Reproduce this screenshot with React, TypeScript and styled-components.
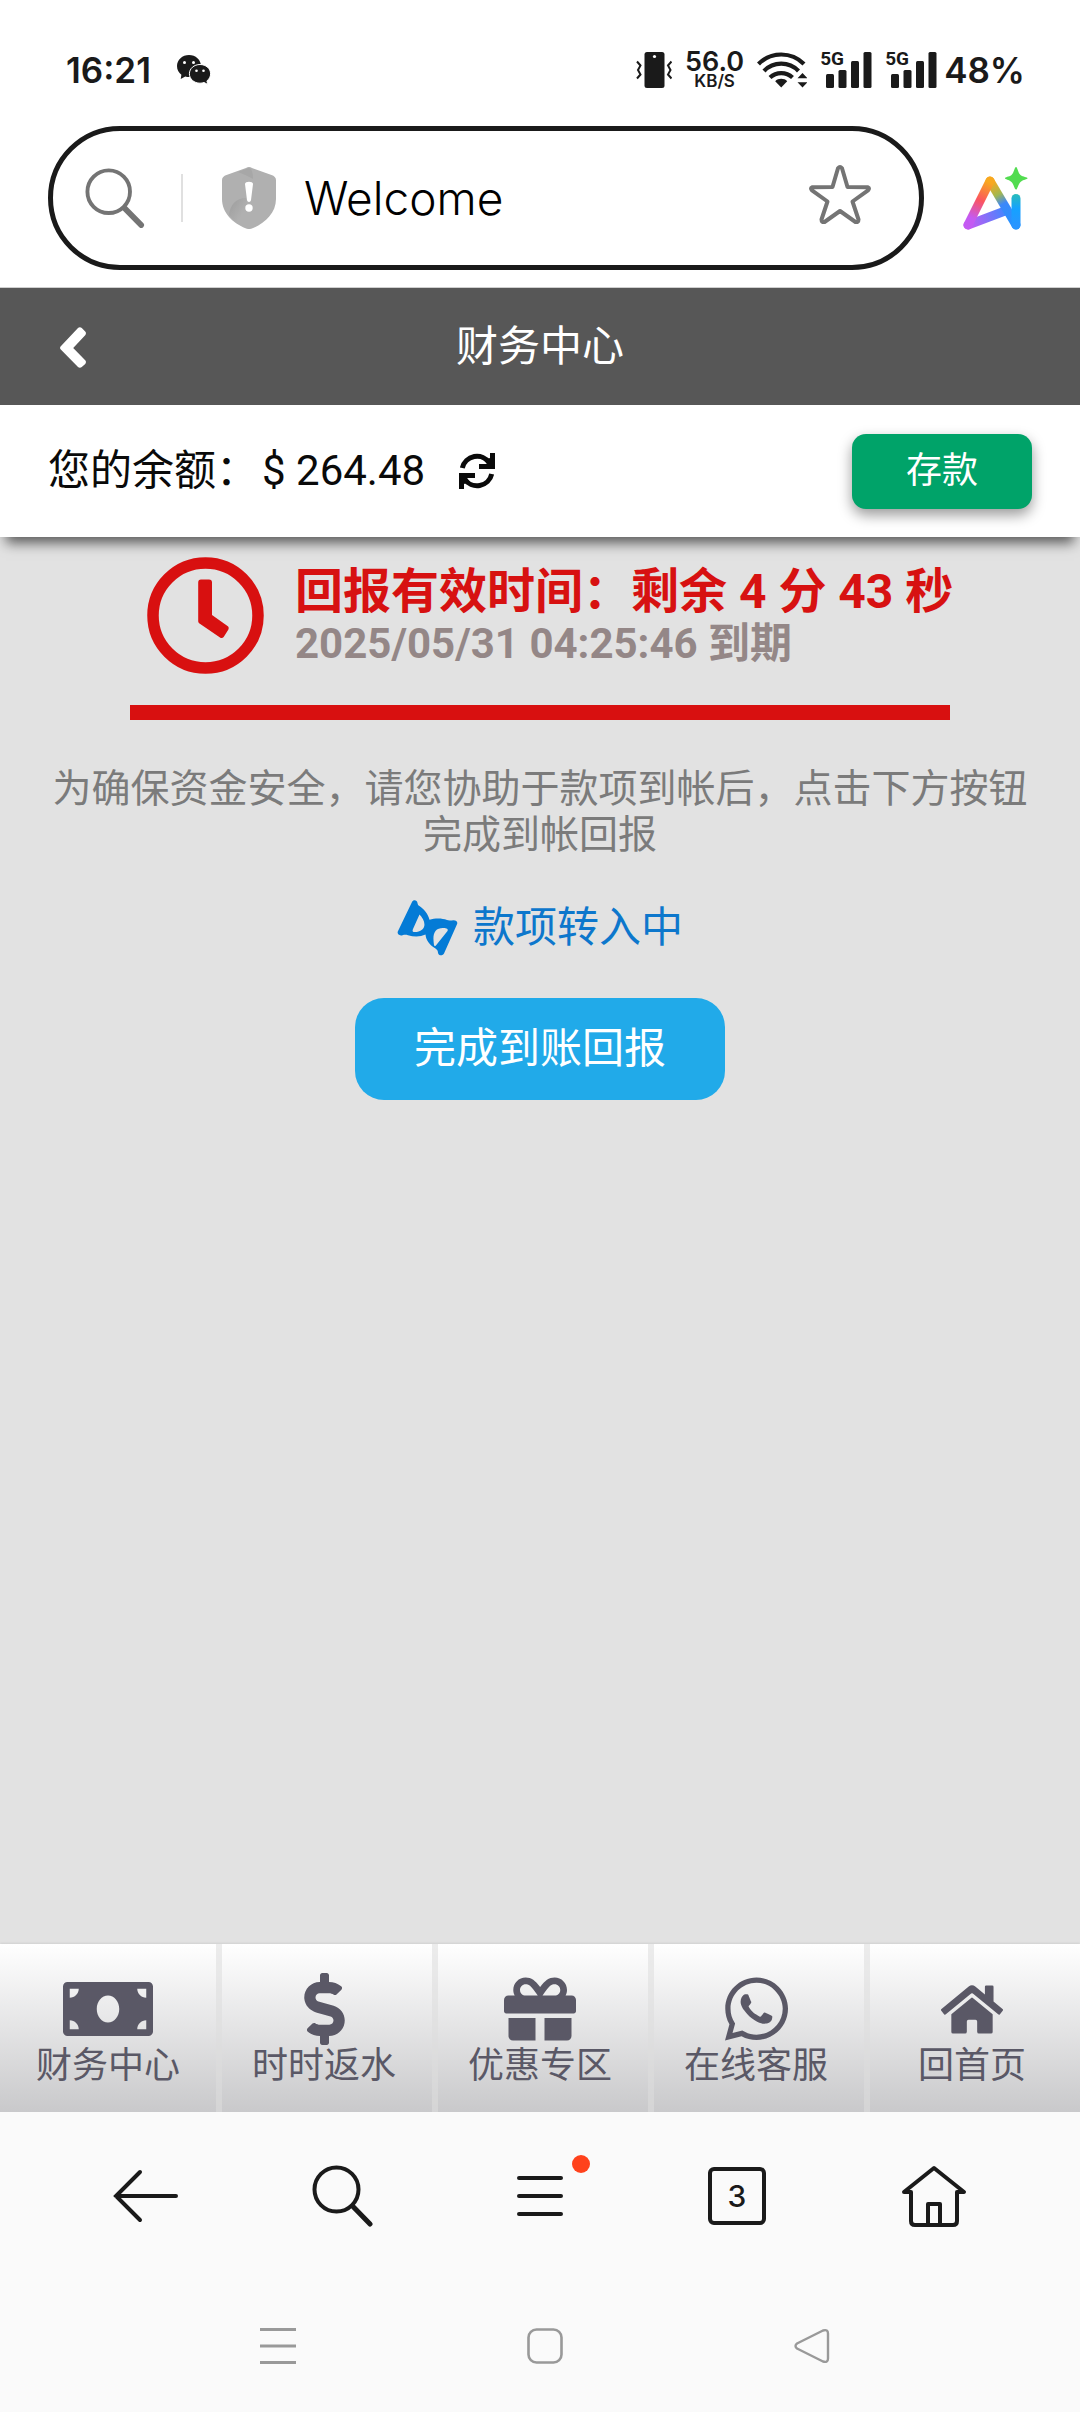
import React from "react";
import styled, { createGlobalStyle } from "styled-components";
import {
  FaDollarSign,
  FaGift,
  FaHome,
  FaMoneyBill,
  FaWhatsapp,
} from "react-icons/fa";

const uiFont = `Roboto, "Noto Sans CJK SC", sans-serif`;
const systemFont = `Inter, "Noto Sans CJK SC", sans-serif`;

const GlobalStyle = createGlobalStyle`
  *, *::before, *::after { box-sizing: border-box; }
  body { margin: 0; background: #fafafa; font-family: ${uiFont}; }
  button, input { font: inherit; color: inherit; margin: 0; padding: 0; border: 0; background: none; }
  button { cursor: pointer; }
  a { color: inherit; text-decoration: none; }
  h1, h2, p { margin: 0; font-weight: inherit; font-size: inherit; }
  svg { display: block; flex: none; }
`;

const Screen = styled.div`
  min-height: 100vh;
  display: flex;
  flex-direction: column;
`;

/* ---------- phone status bar ---------- */

const StatusBar = styled.div`
  display: flex;
  align-items: center;
  justify-content: space-between;
  height: 126px;
  padding: 14px 55px 0 66px;
  background: #fff;
  color: #1a1a1a;
  font-family: ${systemFont};
`;

const StatusGroup = styled.div<{ $gap: number }>`
  display: flex;
  align-items: center;
  gap: ${(p) => p.$gap}px;
`;

const StatusText = styled.span`
  font-size: 35px;
  line-height: 40px;
  font-weight: 600;
`;

const NetSpeed = styled.div`
  display: flex;
  flex-direction: column;
  align-items: center;
  font-weight: 600;
`;

const SpeedValue = styled.span`
  font-size: 27px;
  line-height: 23px;
`;

const SpeedUnit = styled.span`
  font-size: 17px;
  line-height: 17px;
`;

const SignalBox = styled.div`
  position: relative;
  width: 52px;
  height: 36px;
`;

const SignalLabel = styled.span`
  position: absolute;
  top: 0;
  left: 0;
  font-family: Roboto, sans-serif;
  font-size: 19px;
  line-height: 14px;
  font-weight: 700;
`;

/* ---------- browser address bar ---------- */

const AddressRow = styled.div`
  display: flex;
  align-items: center;
  gap: 39px;
  padding: 0 52px 17px 48px;
  background: #fff;
  border-bottom: 1px solid #cfcfcf;
`;

const AddressPill = styled.div`
  flex: 1;
  min-width: 0;
  display: flex;
  align-items: center;
  height: 144px;
  padding: 0 48px 0 32px;
  border: 5px solid #1a1a1a;
  border-radius: 72px;
`;

const Divider = styled.span`
  width: 2px;
  height: 48px;
  margin: 0 39px 0 36px;
  background: #e0e0e0;
`;

const AddressInput = styled.input`
  flex: 1;
  min-width: 0;
  margin-left: 28px;
  font-family: ${systemFont};
  font-size: 46px;
  line-height: 56px;
  font-weight: 300;
  color: #000;
  outline: none;
`;

/* ---------- page header and balance ---------- */

const PageHeader = styled.header`
  display: grid;
  grid-template-columns: 86px 1fr 86px;
  align-items: center;
  height: 117px;
  background: #575757;
  color: #fff;
`;

const BackButton = styled.button`
  display: flex;
  justify-content: flex-end;
`;

const PageTitle = styled.h1`
  text-align: center;
  font-size: 42px;
  line-height: 60px;
`;

const BalanceBar = styled.section`
  position: relative;
  display: flex;
  align-items: center;
  height: 132px;
  padding: 0 48px;
  background: #fff;
  color: #0a0a0a;
  box-shadow: 0 12px 12px -6px rgba(0, 0, 0, 0.6);
`;

const BalanceText = styled.span`
  font-size: 42px;
  line-height: 60px;
`;

const Amount = styled.span`
  margin-left: 4px;
`;

const RefreshButton = styled.button`
  margin-left: 34px;
`;

const DepositButton = styled.button`
  width: 180px;
  height: 75px;
  margin-left: auto;
  border-radius: 14px;
  background: #00a369;
  color: #fff;
  font-size: 36px;
  line-height: 48px;
  box-shadow: 0 6px 14px rgba(0, 0, 0, 0.4);
`;

/* ---------- report panel ---------- */

const Report = styled.main`
  flex: 1;
  display: flex;
  flex-direction: column;
  align-items: center;
  gap: 42px;
  padding: 20px 48px 40px;
  background: #e2e2e2;
`;

const Timer = styled.section`
  width: 820px;
  max-width: 100%;
  display: flex;
  align-items: center;
  gap: 31px;
  padding: 0 0 31px 17px;
  border-bottom: 15px solid #d81010;
  white-space: nowrap;
  font-weight: 700;
`;

const TimerTitle = styled.h2`
  font-size: 48px;
  line-height: 56px;
  color: #d71111;
`;

const TimerExpiry = styled.p`
  font-size: 42px;
  line-height: 48px;
  color: #948787;
`;

const Notice = styled.p`
  padding-top: 4px;
  font-size: 39px;
  line-height: 46px;
  text-align: center;
  color: #7b7b7b;
`;

const Progress = styled.div`
  display: flex;
  align-items: center;
  gap: 14px;
  font-size: 42px;
  line-height: 56px;
  color: #0d77cc;
`;

const SubmitButton = styled.button`
  width: 370px;
  height: 102px;
  border-radius: 29px;
  background: #21aae9;
  color: #fff;
  font-size: 42px;
  line-height: 60px;
`;

/* ---------- site tab bar ---------- */

const SiteNav = styled.nav`
  display: grid;
  grid-template-columns: repeat(5, 1fr);
  background: linear-gradient(#fff, #c9c9cb);
  box-shadow: 0 -1px 2px rgba(0, 0, 0, 0.08);
`;

const SiteNavLink = styled.a`
  display: flex;
  flex-direction: column;
  align-items: center;
  padding: 29px 0 25px;
  color: #5a5866;
  font-size: 36px;
  line-height: 42px;

  & + & { box-shadow: inset 6px 0 0 rgba(221, 221, 221, 0.56); }
`;

const SiteNavIcon = styled.span<{ $width: number; $height: number }>`
  display: flex;
  align-items: center;
  height: 72px;
  svg {
    width: ${(p) => p.$width}px;
    height: ${(p) => p.$height}px;
  }
`;

/* ---------- browser and system navigation ---------- */

const BrowserBar = styled.nav`
  display: grid;
  grid-template-columns: repeat(5, 1fr);
  height: 168px;
  padding: 0 48px;
  background: #fafafa;
  color: #1a1a1a;
`;

const BarButton = styled.button`
  display: flex;
  align-items: center;
  justify-content: center;
`;

const MenuIconBox = styled.span`
  position: relative;
`;

const Dot = styled.span`
  position: absolute;
  top: -21px;
  right: -27px;
  width: 18px;
  height: 18px;
  border-radius: 50%;
  background: #ff421c;
`;

const TabCount = styled.span`
  display: flex;
  align-items: center;
  justify-content: center;
  width: 58px;
  height: 58px;
  border: 4px solid #1a1a1a;
  border-radius: 6px;
  font-family: ${systemFont};
  font-size: 30px;
  line-height: 36px;
  font-weight: 500;
`;

const SystemBar = styled.nav`
  display: grid;
  grid-template-columns: repeat(3, 1fr);
  height: 132px;
  padding: 0 134px 0 144px;
  background: #fafafa;
  color: #999;
`;

/* ---------- drawings ---------- */

const WeChatIcon = () => (
  <svg width="34" height="30" viewBox="0 0 34 30" aria-hidden="true">
    <path
      fill="#1a1a1a"
      d="M12 0C5.400 0 0 4.800 0 11c0 3.700 1.700 6.700 4.400 8.700L3.700 24l4.600-2.600c1.200.4 2.400.6 3.700.6 6.600 0 12-4.800 12-11S18.600 0 12 0z"
    />
    <path
      fill="#1a1a1a"
      stroke="#fff"
      strokeWidth="1"
      d="M23 9.500c-5.900 0-10.600 4-10.600 9.300 0 5.200 4.700 9.400 10.600 9.400 1.500 0 2.800-.3 4-.7l3.900 2-1-3.600c2.300-1.700 3.700-4.200 3.700-7.100 0-5.300-4.700-9.300-10.600-9.300z"
    />
    <g fill="#fff">
      <circle cx="7.500" cy="7.500" r="1.500" />
      <circle cx="16.500" cy="7.500" r="1.500" />
      <circle cx="19.500" cy="15.800" r="1.300" />
      <circle cx="26.500" cy="15.800" r="1.300" />
    </g>
  </svg>
);

const VibrateIcon = () => (
  <svg width="36" height="36" viewBox="0 0 36 36" aria-hidden="true">
    <rect x="8.500" y="0" width="20" height="36" rx="2.500" fill="#1a1a1a" />
    <circle cx="18.500" cy="4.500" r="1.600" fill="#fff" />
    <g fill="none" stroke="#1a1a1a" strokeWidth="2">
      <path d="M1 9.500l3.500 4-2.500 4.500 2.500 4.500L1 26.500" />
      <path d="M35.500 9.500l-3.500 4 2.500 4.500-2.500 4.500 3.500 4" />
    </g>
  </svg>
);

const WifiIcon = () => (
  <svg width="50" height="36" viewBox="0 0 50 36" aria-hidden="true">
    <g fill="none" stroke="#1a1a1a" strokeWidth="4.200">
      <path d="M1.500 12a32 32 0 0 1 45.500 0" />
      <path d="M7 19a24 24 0 0 1 34.500 0" />
      <path d="M13 25.500a16.500 16.500 0 0 1 22.500 0" />
    </g>
    <path fill="#1a1a1a" d="M24.200 35.500l-6-6.300c3-3.200 9-3.200 12 0z" />
    <path fill="#1a1a1a" d="M45.500 21l5 5.200H40.500zM45.500 35.500l5-5.200H40.500z" />
  </svg>
);

const Signal = () => (
  <SignalBox>
    <svg width="52" height="36" viewBox="0 0 52 36" aria-hidden="true">
      <g fill="#1a1a1a">
        <rect x="6" y="22" width="8" height="14" rx="1.500" />
        <rect x="18.500" y="18" width="8" height="18" rx="1.500" />
        <rect x="31" y="9" width="8" height="27" rx="1.500" />
        <rect x="43.500" y="0" width="8" height="36" rx="1.500" />
      </g>
    </svg>
    <SignalLabel>5G</SignalLabel>
  </SignalBox>
);

const SearchIcon = ({ color, handle, size }: { color: string; handle: number; size: number }) => (
  <svg width={size} height={size} viewBox="0 0 62 62" fill="none" stroke={color} aria-hidden="true">
    <circle cx="24.500" cy="24.500" r="22" strokeWidth="4" />
    <path d="M41 41.500l17 17.500" strokeWidth={handle} strokeLinecap="round" />
  </svg>
);

const ShieldIcon = () => (
  <svg width="54" height="62" viewBox="0 0 54 62" aria-hidden="true">
    <defs>
      <linearGradient id="shieldShade" x1="0" y1="0" x2="1" y2="1">
        <stop offset="0" stopColor="#9c9c9c" />
        <stop offset="0.600" stopColor="#b0b0b0" />
      </linearGradient>
    </defs>
    <path
      fill="#b0b0b0"
      d="M27 0c1 0 2 .4 3 1l19.500 7c2.700 1 4.500 2.500 4.500 5v19c0 14-11 24-23.500 29.300-2.500 1-4.500 1-7 0C11 56 0 46 0 32V13c0-2.500 1.800-4 4.500-5L24 1c1-.6 2-1 3-1z"
    />
    <path fill="url(#shieldShade)" d="M24 31C14 31 8 38 7 48c5 6 11 10 18 13 4-6 2-14-1-20 1-3 1-6 0-10z" />
    <path fill="#a7a7a7" d="M16 5L27 1c3 1 4 5 4 11-4-2-9-5-15-7z" />
    <path fill="#fff" d="M23 17c0-3 8-3 8 0l-2 16c-.4 2.500-3.600 2.500-4 0z" />
    <circle cx="27" cy="41" r="3.700" fill="#fff" />
  </svg>
);

const StarIcon = () => (
  <svg
    width="62"
    height="66"
    viewBox="0 0 62 66"
    fill="none"
    stroke="#747474"
    strokeWidth="4"
    strokeLinejoin="round"
    aria-hidden="true"
  >
    <path d="M29 3.200q2-2.400 4 0l5.500 18.800 20.500.3q2 .8 0 3L43.500 36.500l6 18q0 3-3 2.500L31 46 15.500 57q-3 .5-3-2.500l6-18L3 25.300q-2-2.200 0-3L23.500 22z" />
  </svg>
);

const AiLogo = () => (
  <svg width="65" height="63" viewBox="0 0 65 63" fill="none" aria-hidden="true">
    <defs>
      <linearGradient id="aiLeft" gradientUnits="userSpaceOnUse" x1="27" y1="10" x2="5" y2="58">
        <stop offset="0.100" stopColor="#f8a81f" />
        <stop offset="0.480" stopColor="#fb5560" />
        <stop offset="0.850" stopColor="#c45af2" />
      </linearGradient>
      <linearGradient id="aiCross" gradientUnits="userSpaceOnUse" x1="6" y1="57" x2="42" y2="43">
        <stop offset="0" stopColor="#c45af2" />
        <stop offset="1" stopColor="#4286ff" />
      </linearGradient>
      <linearGradient id="aiRight" gradientUnits="userSpaceOnUse" x1="27" y1="10" x2="53" y2="58">
        <stop offset="0.100" stopColor="#f8a81f" />
        <stop offset="0.350" stopColor="#a4b84d" />
        <stop offset="0.550" stopColor="#3d88fa" />
        <stop offset="1" stopColor="#2393ff" />
      </linearGradient>
      <linearGradient id="aiStem" gradientUnits="userSpaceOnUse" x1="53" y1="25" x2="53" y2="58">
        <stop offset="0" stopColor="#2cc0b0" />
        <stop offset="0.500" stopColor="#14a2ff" />
        <stop offset="1" stopColor="#2996ff" />
      </linearGradient>
    </defs>
    <g strokeWidth="9" strokeLinecap="round" strokeLinejoin="round">
      <path stroke="url(#aiCross)" d="M5 58l37-14" />
      <path stroke="url(#aiRight)" d="M27 14l26 44" />
      <path stroke="url(#aiLeft)" d="M27 14L5 58" />
      <path stroke="url(#aiStem)" d="M53 58V31.500" />
    </g>
    <path fill="#52dc50" d="M53 0c1.500 0 2 6 4.500 8.000S64.500 10 64.500 11.200s-4.500 1.300-7 3.800-3 7.500-4.500 7.500-2-5-4.500-7.500-6.500-2.500-6.500-3.800 4-1.200 6.500-3.200S51.500 0 53 0z" />
  </svg>
);

const ChevronIcon = () => (
  <svg width="26" height="42" viewBox="0 0 26 42" aria-hidden="true">
    <path
      fill="#fff"
      d="M18 2c1-1 2.800-1 3.800 0l3.400 3.400c1 1 1 2.800 0 3.800L13.200 22l12 12.200c1 1 1 2.800 0 3.800l-3.400 3c-1 1-2.800 1-3.800 0L.8 23.500c-1-1-1-2.200 0-3.200z"
    />
  </svg>
);

const RefreshIcon = () => (
  <svg width="36" height="38" viewBox="0 0 36 38" aria-hidden="true">
    <g fill="none" stroke="#0a0a0a" strokeWidth="5">
      <path d="M3.300 16A15 15 0 0 1 30.500 11" />
      <path d="M32.700 22A15 15 0 0 1 5.500 27" />
    </g>
    <path fill="#0a0a0a" d="M31 1h5v16H20v-5h8l-3-4 6-2z" />
    <path fill="#0a0a0a" d="M5 37H0V21h16v5H8l3 4-6 2z" />
  </svg>
);

const ClockIcon = () => (
  <svg width="117" height="117" viewBox="0 0 117 117" fill="none" aria-hidden="true">
    <circle cx="58.500" cy="58.500" r="52.500" stroke="#d81010" strokeWidth="11.500" />
    <path
      fill="#d81010"
      d="M54 22.500h8c2 0 3 1 3 3V58l15.500 11c1.500 1 1.500 2.500.6 4L77 79.500c-1 1.500-2.500 2-4 1L52.500 66.500c-1-.7-1.300-1.500-1.300-2.500V25.500c0-2 1-3 2.800-3z"
    />
  </svg>
);

const HourglassIcon = () => (
  <svg width="62" height="56" viewBox="0 0 62 56" aria-hidden="true">
    <path
      fill="#047bd6"
      fillRule="evenodd"
      d="M15 2c1-2.500 5-2.500 5.500 1 .2 1 .4 2 1.500 2.800 5 3.400 9 8 10.500 14C38 18 45 18 50 20c2 .8 4 .3 6.500.2 3 0 4.500 2 3.500 4L47 53.500c-1.200 2.600-5.500 2.500-6-.8-.2-2-.8-3-2.500-4.200C32 44.500 29 40 28.500 34.500 23 37 17 36.800 11 35.200c-2-.5-3.500-.5-5.500 0C2 36 0 34 .8 31.500zM22.500 14.500L16 29c-.8 2-.5 3 1.500 3 4 .2 8-1.600 9.500-5 1.500-4-1-9-4.500-12.500zM49.500 28.500c-4-1-8.500-.5-11 2.500-3 4-2 10-1.500 14 .3 1.500 1.500 1.500 2.300 0L50.500 31c.5-1.200.2-2.200-1-2.500z"
    />
  </svg>
);

const ArrowLeftIcon = () => (
  <svg width="66" height="54" viewBox="0 0 66 54" fill="none" stroke="#1a1a1a" strokeWidth="4" strokeLinecap="round" aria-hidden="true">
    <path d="M27 3L3 27l24 24M3 27h60" />
  </svg>
);

const MenuIcon = () => (
  <svg width="46" height="40" viewBox="0 0 46 40" stroke="#1a1a1a" strokeWidth="4" strokeLinecap="round" aria-hidden="true">
    <path d="M2 2h42M2 20h42M2 38h42" />
  </svg>
);

const HouseIcon = () => (
  <svg width="66" height="64" viewBox="0 0 66 64" fill="none" stroke="#1a1a1a" strokeWidth="4" strokeLinecap="round" strokeLinejoin="round" aria-hidden="true">
    <path d="M10 28H3L33 4l30 24h-7v29q0 4-4 4H14q-4 0-4-4z" />
    <path d="M27 61V40h12v21" />
  </svg>
);

const RecentsIcon = () => (
  <svg width="36" height="36" viewBox="0 0 36 36" stroke="#999" strokeWidth="3" aria-hidden="true">
    <path d="M0 1.500h36M0 18h36M0 34.500h36" />
  </svg>
);

const SquareIcon = () => (
  <svg width="36" height="36" viewBox="0 0 36 36" fill="none" stroke="#999" strokeWidth="2.600" aria-hidden="true">
    <rect x="1.500" y="1.500" width="33" height="33" rx="8" />
  </svg>
);

const TriangleIcon = () => (
  <svg width="36" height="36" viewBox="0 0 36 36" fill="none" stroke="#999" strokeWidth="2.400" strokeLinejoin="round" aria-hidden="true">
    <path d="M29 2.500q5-1.500 5 3v25q0 4.500-5 3L3 20.500q-3-2.500 0-5z" />
  </svg>
);

const siteLinks = [
  { label: "财务中心", icon: <FaMoneyBill />, width: 90, height: 72 },
  { label: "时时返水", icon: <FaDollarSign />, width: 41, height: 72 },
  { label: "优惠专区", icon: <FaGift />, width: 72, height: 72 },
  { label: "在线客服", icon: <FaWhatsapp />, width: 63, height: 72 },
  { label: "回首页", icon: <FaHome />, width: 62, height: 63 },
];

export default function App() {
  return (
    <Screen>
      <GlobalStyle />
      <StatusBar>
        <StatusGroup $gap={26}>
          <StatusText>16:21</StatusText>
          <WeChatIcon />
        </StatusGroup>
        <StatusGroup $gap={7}>
          <StatusGroup $gap={13}>
            <VibrateIcon />
            <NetSpeed>
              <SpeedValue>56.0</SpeedValue>
              <SpeedUnit>KB/S</SpeedUnit>
            </NetSpeed>
            <WifiIcon />
            <Signal />
            <Signal />
          </StatusGroup>
          <StatusText>48%</StatusText>
        </StatusGroup>
      </StatusBar>

      <AddressRow>
        <AddressPill>
          <SearchIcon color="#747474" handle={6} size={60} />
          <Divider />
          <ShieldIcon />
          <AddressInput type="text" aria-label="Address" defaultValue="Welcome" />
          <BarButton aria-label="Bookmark">
            <StarIcon />
          </BarButton>
        </AddressPill>
        <BarButton aria-label="AI">
          <AiLogo />
        </BarButton>
      </AddressRow>

      <PageHeader>
        <BackButton aria-label="返回">
          <ChevronIcon />
        </BackButton>
        <PageTitle>财务中心</PageTitle>
      </PageHeader>

      <BalanceBar>
        <BalanceText>
          您的余额：<Amount>$ 264.48</Amount>
        </BalanceText>
        <RefreshButton aria-label="刷新">
          <RefreshIcon />
        </RefreshButton>
        <DepositButton>存款</DepositButton>
      </BalanceBar>

      <Report>
        <Timer>
          <ClockIcon />
          <div>
            <TimerTitle>回报有效时间：剩余 4 分 43 秒</TimerTitle>
            <TimerExpiry>2025/05/31 04:25:46 到期</TimerExpiry>
          </div>
        </Timer>
        <Notice>为确保资金安全，请您协助于款项到帐后，点击下方按钮完成到帐回报</Notice>
        <Progress>
          <HourglassIcon />
          款项转入中
        </Progress>
        <SubmitButton>完成到账回报</SubmitButton>
      </Report>

      <SiteNav>
        {siteLinks.map((link) => (
          <SiteNavLink key={link.label} href="#">
            <SiteNavIcon $width={link.width} $height={link.height}>
              {link.icon}
            </SiteNavIcon>
            {link.label}
          </SiteNavLink>
        ))}
      </SiteNav>

      <BrowserBar>
        <BarButton aria-label="Back">
          <ArrowLeftIcon />
        </BarButton>
        <BarButton aria-label="Search">
          <SearchIcon color="#1a1a1a" handle={5} size={62} />
        </BarButton>
        <BarButton aria-label="Menu">
          <MenuIconBox>
            <MenuIcon />
            <Dot />
          </MenuIconBox>
        </BarButton>
        <BarButton aria-label="Tabs">
          <TabCount>3</TabCount>
        </BarButton>
        <BarButton aria-label="Home">
          <HouseIcon />
        </BarButton>
      </BrowserBar>

      <SystemBar>
        <BarButton aria-label="Recents">
          <RecentsIcon />
        </BarButton>
        <BarButton aria-label="System home">
          <SquareIcon />
        </BarButton>
        <BarButton aria-label="System back">
          <TriangleIcon />
        </BarButton>
      </SystemBar>
    </Screen>
  );
}
